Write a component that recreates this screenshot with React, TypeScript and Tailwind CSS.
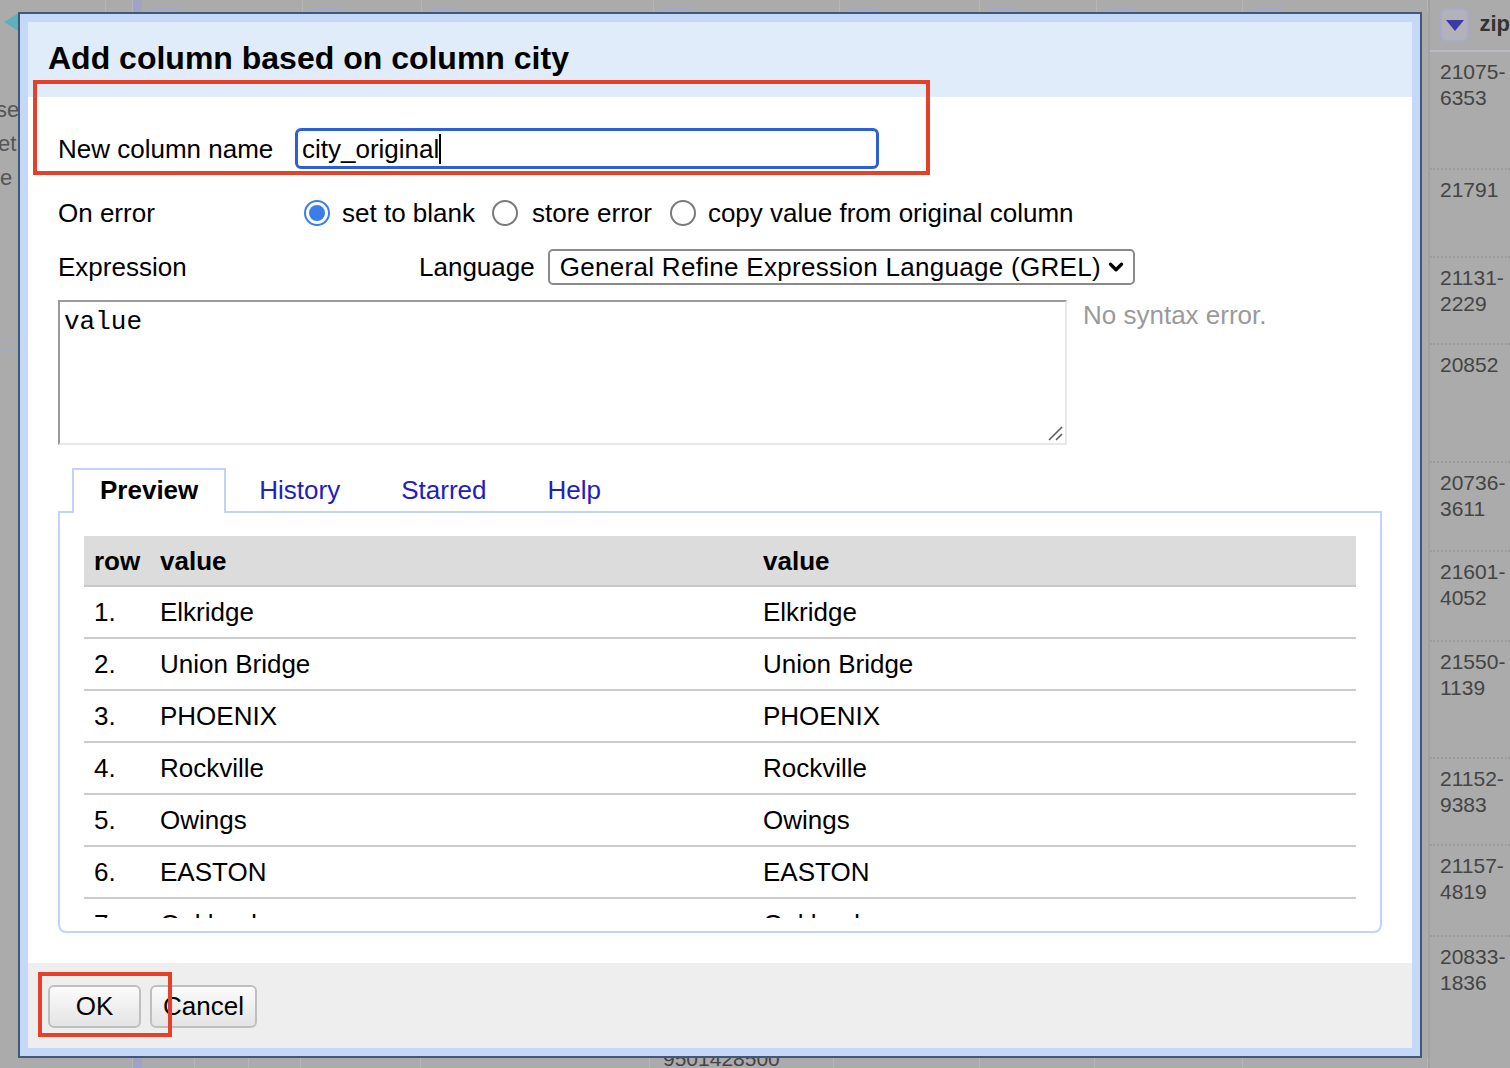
import React from "react";
import { ChevronDown } from "lucide-react";

const topCells = [
  { w: "w-[106px]", btn: false, blue: false },
  { w: "w-[27px]", btn: false, blue: false },
  { w: "w-[9px]", btn: false, blue: true },
  { w: "w-[161px]", btn: true, blue: false },
  { w: "w-[119px]", btn: true, blue: false },
  { w: "w-[232px]", btn: true, blue: false },
  { w: "w-[186px]", btn: true, blue: false },
  { w: "w-[140px]", btn: true, blue: false },
  { w: "w-[117px]", btn: true, blue: false },
  { w: "w-[146px]", btn: true, blue: false },
  { w: "w-[185px]", btn: true, blue: false },
];

const bottomCells = [
  { w: "w-[133px]", blue: false, text: "" },
  { w: "w-[9px]", blue: true, text: "" },
  { w: "w-[53px]", blue: false, text: "" },
  { w: "w-[54px]", blue: false, text: "" },
  { w: "w-[52px]", blue: false, text: "" },
  { w: "w-[120px]", blue: false, text: "" },
  { w: "w-[229px]", blue: false, text: "" },
  { w: "w-[184px]", blue: false, text: "9501428500" },
  { w: "w-[146px]", blue: false, text: "" },
  { w: "w-[115px]", blue: false, text: "" },
  { w: "w-[148px]", blue: false, text: "" },
  { w: "w-[185px]", blue: false, text: "" },
];

const zipRows = [
  { h: "h-[118px]", lines: ["21075-", "6353"] },
  { h: "h-[88px]", lines: ["21791"] },
  { h: "h-[87px]", lines: ["21131-", "2229"] },
  { h: "h-[118px]", lines: ["20852"] },
  { h: "h-[89px]", lines: ["20736-", "3611"] },
  { h: "h-[90px]", lines: ["21601-", "4052"] },
  { h: "h-[117px]", lines: ["21550-", "1139"] },
  { h: "h-[87px]", lines: ["21152-", "9383"] },
  { h: "h-[91px]", lines: ["21157-", "4819"] },
];

const previewRows = [
  ["1.", "Elkridge"],
  ["2.", "Union Bridge"],
  ["3.", "PHOENIX"],
  ["4.", "Rockville"],
  ["5.", "Owings"],
  ["6.", "EASTON"],
  ["7.", "Oakland"],
];

function RadioChecked() {
  return (
    <span className="flex h-[26px] w-[26px] shrink-0 items-center justify-center rounded-full border-2 border-[#3b7de9] bg-white">
      <span className="block h-[16px] w-[16px] rounded-full bg-[#3b7de9]" />
    </span>
  );
}

function RadioEmpty({ cls }: { cls: string }) {
  return <span className={`${cls} block h-[26px] w-[26px] shrink-0 rounded-full border-2 border-[#7a7a7a] bg-white`} />;
}

function TopStrip() {
  return (
    <div className="flex h-[12px] shrink-0 overflow-hidden">
      {topCells.map((c, i) => (
        <div
          key={i}
          className={
            c.blue
              ? `${c.w} h-full bg-[#9fa3c6]`
              : `${c.w} h-full border-r border-[#b6b6b6] pl-[8px] pt-[7px]`
          }
        >
          {c.btn && <div className="h-[20px] w-[32px] rounded-[6px] border-2 border-[#a3a7c9]" />}
        </div>
      ))}
    </div>
  );
}

function BottomStrip() {
  return (
    <div className="flex h-[10px] shrink-0">
      {bottomCells.map((c, i) => (
        <div
          key={i}
          className={c.blue ? `${c.w} h-full bg-[#9fa3c6]` : `${c.w} h-full border-r border-[#b6b6b6] pl-[13px]`}
        >
          {c.text && (
            <div className="-mt-[11px] text-[21px] leading-[24px] text-[#444444]">{c.text}</div>
          )}
        </div>
      ))}
    </div>
  );
}

function ZipColumn() {
  return (
    <div className="flex w-[82px] shrink-0 flex-col border-l-2 border-[#a2a2a2]">
      <div className="flex h-[52px] shrink-0 items-start border-b-2 border-[#b8bac6] pl-[10px] pt-[8px]">
        <div className="flex h-[34px] w-[32px] items-center justify-center rounded-[6px] border-2 border-[#a6aacb] bg-[#b2b2b8]">
          <svg width="18" height="11" viewBox="0 0 18 11">
            <polygon points="0,0 18,0 9,11" fill="#3a3aa8" />
          </svg>
        </div>
        <span className="ml-[10px] mt-[2px] text-[22px] font-bold leading-[28px] text-[#333333]">zip</span>
      </div>
      {zipRows.map((r, i) => (
        <div key={i} className={`${r.h} shrink-0 border-b-2 border-dotted border-[#9c9c9c] pl-[10px] pt-[7px]`}>
          {r.lines.map((l, j) => (
            <div key={j} className="text-[21px] leading-[26px] text-[#444444]">
              {l}
            </div>
          ))}
        </div>
      ))}
      <div className="flex-1 pl-[10px] pt-[7px]">
        <div className="text-[21px] leading-[26px] text-[#444444]">20833-</div>
        <div className="text-[21px] leading-[26px] text-[#444444]">1836</div>
      </div>
    </div>
  );
}

function Dialog() {
  return (
    <div className="absolute left-[18px] top-[12px] z-10 h-[1046px] w-[1404px] border-2 border-[#40597a] bg-[#c6d8f8] p-[8px]">
      <div className="flex h-full flex-col bg-white text-black">
        <div className="h-[75px] shrink-0 bg-[#e1ecfa] pl-[20px] pt-[16px] text-[32px] font-bold leading-[40px]">
          Add column based on column city
        </div>

        <div className="flex-1 px-[30px] text-[26px]">
          {/* new column name */}
          <div className="mt-[31px] flex h-[41px] items-center">
            <span className="w-[237px] shrink-0 leading-[30px]">New column name</span>
            <div className="flex h-[41px] w-[584px] items-center rounded-[6px] border-[3px] border-[#2c5fd8] pl-[4px]">
              <span className="leading-[30px]">city_original</span>
              <span className="h-[30px] w-[2px] bg-black" />
            </div>
          </div>

          {/* on error */}
          <div className="mt-[26px] flex h-[36px] items-center leading-[30px]">
            <span className="w-[246px] shrink-0">On error</span>
            <RadioChecked />
            <span className="ml-[12px]">set to blank</span>
            <RadioEmpty cls="ml-[17px]" />
            <span className="ml-[14px]">store error</span>
            <RadioEmpty cls="ml-[18px]" />
            <span className="ml-[12px]">copy value from original column</span>
          </div>

          {/* expression / language */}
          <div className="mt-[18px] flex h-[36px] items-center leading-[30px]">
            <span className="w-[361px] shrink-0">Expression</span>
            <span>Language</span>
            <div className="ml-[13px] flex h-[36px] w-[587px] items-center rounded-[5px] border-2 border-[#8a8a8a] pl-[10px]">
              <span className="tracking-[0.3px]">General Refine Expression Language (GREL)</span>
              <ChevronDown className="ml-[4px]" size={22} strokeWidth={3.5} color="#000" />
            </div>
          </div>

          {/* textarea */}
          <div className="mt-[15px] flex items-start">
            <div className="relative h-[145px] w-[1009px] shrink-0 border-2 border-b-[#e8e8e8] border-l-[#9a9a9a] border-r-[#e8e8e8] border-t-[#9a9a9a] pl-[4px] pt-[5px] font-['Liberation_Mono',monospace] text-[26px] leading-[30px]">
              value
              <svg className="absolute bottom-[2px] right-[2px]" width="16" height="16" viewBox="0 0 16 16">
                <line x1="15" y1="2" x2="2" y2="15" stroke="#5a5a5a" strokeWidth="1.6" />
                <line x1="15" y1="9" x2="9" y2="15" stroke="#5a5a5a" strokeWidth="1.6" />
              </svg>
            </div>
            <span className="ml-[16px] leading-[30px] text-[#9a9a9a]">No syntax error.</span>
          </div>

          {/* tabs */}
          <div className="relative z-10 mt-[23px] flex gap-[5px] pl-[14px]">
            <div className="h-[45px] border-2 border-b-0 border-[#c3d3f6] bg-white px-[26px] font-bold leading-[40px]">
              Preview
            </div>
            <div className="h-[45px] border-2 border-b-0 border-transparent px-[26px] leading-[40px] text-[#2020c2]">
              History
            </div>
            <div className="h-[45px] border-2 border-b-0 border-transparent px-[26px] leading-[40px] text-[#2020c2]">
              Starred
            </div>
            <div className="h-[45px] border-2 border-b-0 border-transparent px-[26px] leading-[40px] text-[#2020c2]">
              Help
            </div>
          </div>
          <div className="-mt-[2px] h-[422px] w-[1324px] rounded-b-[8px] border-2 border-[#c3d3f6] px-[24px] pb-[13px] pt-[23px]">
            <div className="h-full overflow-hidden">
              <div className="grid h-[51px] grid-cols-[66px_603px_603px] items-center border-b-2 border-[#c8c8c8] bg-[#dcdcdc] font-bold leading-[30px]">
                <span className="pl-[10px]">row</span>
                <span className="pl-[10px]">value</span>
                <span className="pl-[10px]">value</span>
              </div>
              {previewRows.map(([n, v]) => (
                <div
                  key={n}
                  className="grid h-[52px] grid-cols-[66px_603px_603px] items-center border-b-2 border-[#cccccc] leading-[30px]"
                >
                  <span className="pl-[10px]">{n}</span>
                  <span className="pl-[10px]">{v}</span>
                  <span className="pl-[10px]">{v}</span>
                </div>
              ))}
            </div>
          </div>
        </div>

        <div className="flex h-[85px] shrink-0 items-start gap-[9px] bg-[#eeeeee] pl-[20px] pt-[22px] text-[26px]">
          <div className="flex h-[43px] w-[93px] items-center justify-center rounded-[6px] border-2 border-[#bfbfbf] bg-gradient-to-b from-[#fbfbfb] to-[#e4e4e4]">
            OK
          </div>
          <div className="flex h-[43px] w-[107px] items-center justify-center rounded-[6px] border-2 border-[#bfbfbf] bg-gradient-to-b from-[#fbfbfb] to-[#e4e4e4]">
            Cancel
          </div>
        </div>
      </div>
    </div>
  );
}

export default function App() {
  return (
    <div className="relative flex h-[1068px] w-[1510px] overflow-hidden bg-[#ababab] font-['Liberation_Sans',Arial,sans-serif]">
      <div className="flex w-[1428px] shrink-0 flex-col">
        <TopStrip />
        <div className="flex-1">
          <svg className="ml-[4px]" width="16" height="20" viewBox="0 0 16 20">
            <polygon points="16,0 16,20 0,10" fill="#5fb0bd" />
          </svg>
          <div className="-ml-[4px] pt-[61px] text-[22px] leading-[34px] text-[#555555]">
            <div>se</div>
            <div className="ml-[2px]">et</div>
            <div className="ml-[4px]">e</div>
          </div>
          <div className="mt-[155px] h-[2px] w-[20px] bg-[#a6a9c6]" />
        </div>
        <BottomStrip />
      </div>
      <ZipColumn />
      <Dialog />
      <div className="absolute left-[33px] top-[80px] z-20 h-[95px] w-[897px] border-4 border-[#e6402b]" />
      <div className="absolute left-[38px] top-[972px] z-20 h-[65px] w-[134px] border-4 border-[#e6402b]" />
    </div>
  );
}
